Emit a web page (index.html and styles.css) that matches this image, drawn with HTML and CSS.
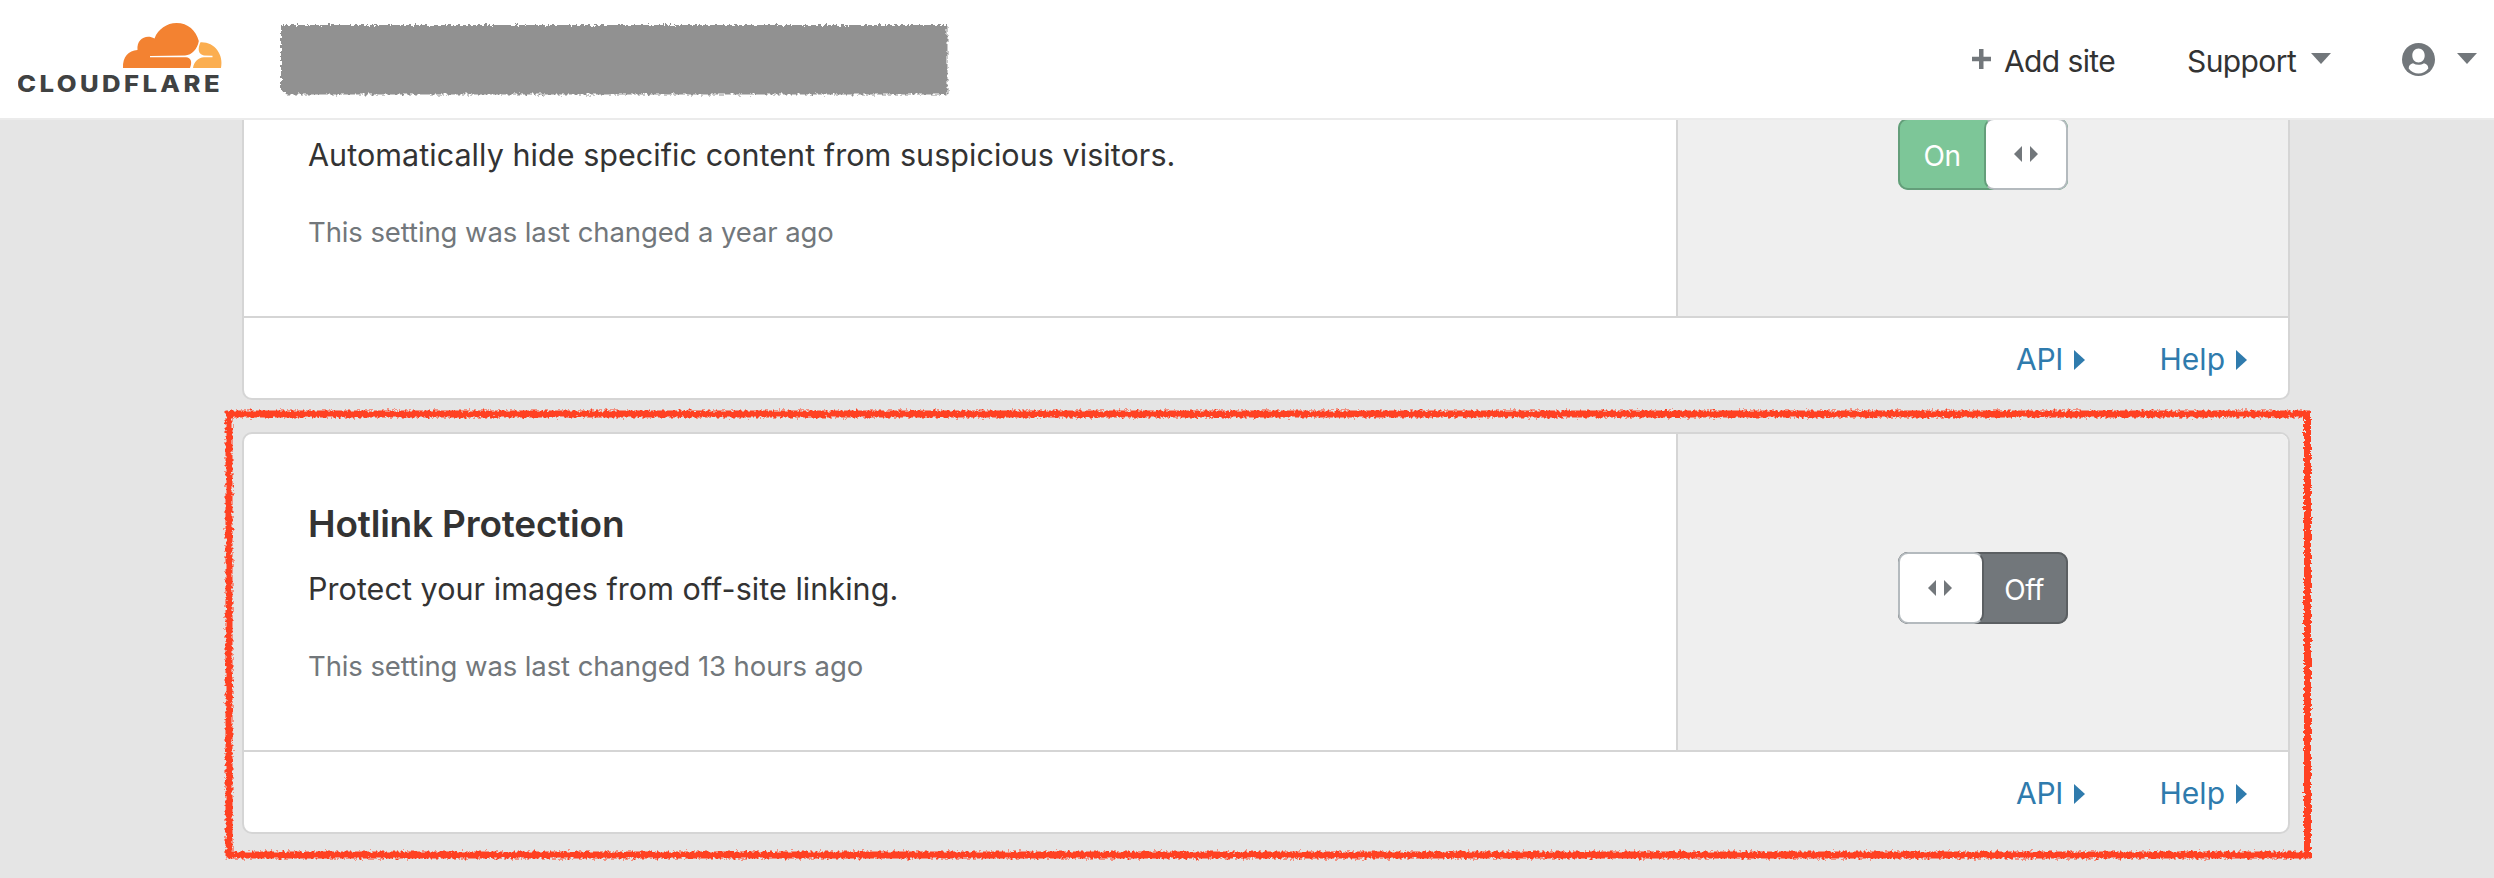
FILE: index.html
```html
<!DOCTYPE html>
<html lang="en">
<head>
<meta charset="utf-8">
<title>Scrape Shield | Cloudflare</title>
<link rel="stylesheet" href="styles.css">
</head>
<body>
<header class="topbar">
  <svg class="logo" width="220" height="80" viewBox="0 0 220 80" role="img" aria-label="Cloudflare">
    <path class="cloud-main" d="M105 53C104.500 42 110.500 35.500 119.500 35C118.500 24 128 19 136.500 23.500C140 14 149 8 158.500 8C170 8 178 15.500 180.800 26C179.500 34 174 40.200 167 40.400L132 41V42.300H168C173 42.500 174.500 47 172 53Z"/>
    <path class="cloud-side" d="M182.500 27.200C196 26.500 206 39 203 53H175C176 47 180 42.500 186 42.300H194.500V40.800L186 40.400C180 39.500 179.500 33 182.500 27.200Z"/>
    <text class="wordmark" x="-1" y="76.500" textLength="206" lengthAdjust="spacingAndGlyphs">CLOUDFLARE</text>
  </svg>
  <svg class="redacted" width="672" height="76" viewBox="0 0 672 76" aria-hidden="true">
    <defs>
      <filter id="rough" x="-2%" y="-5%" width="104%" height="110%" color-interpolation-filters="sRGB">
        <feTurbulence type="fractalNoise" baseFrequency="0.3" numOctaves="2" seed="4"/>
        <feDisplacementMap in="SourceGraphic" scale="6" xChannelSelector="R" yChannelSelector="G"/>
      </filter>
    </defs>
    <path filter="url(#rough)" fill="#919191" d="M3 3H669.500V72.500H9L3 68Z"/>
  </svg>
  <nav class="nav">
    <a class="nav-item add"><svg width="19" height="20" viewBox="0 0 19 20"><path d="M7 0h4.500v7.700H19v4.600h-7.500V20H7v-7.700H0V7.700h7z"/></svg><span>Add site</span></a>
    <a class="nav-item support"><span>Support</span><svg width="20" height="11" viewBox="0 0 20 11"><path d="M0 0h20L10 11z"/></svg></a>
    <a class="nav-item user"><svg class="avatar" width="33" height="33" viewBox="0 0 33 33"><circle cx="16.500" cy="16.500" r="16.500"/><path fill="#fff" d="M16.500 5.500c3.700 0 6.200 3 6.200 7s-2.500 7-6.200 7-6.200-3-6.200-7 2.500-7 6.200-7zM11 20.200c3.500 2 7.500 2 11 0 2.700.5 4.300 2.500 4.300 5.300-2.500 3.300-6 5-9.800 5s-7.300-1.700-9.800-5c0-2.800 1.600-4.800 4.300-5.300z"/></svg><svg width="20" height="11" viewBox="0 0 20 11"><path d="M0 0h20L10 11z"/></svg></a>
  </nav>
</header>
<main class="settings">
  <section class="card">
    <div class="card-body">
      <div class="info">
        <h2 class="title">Server-side Excludes</h2>
        <p class="desc">Automatically hide specific content from suspicious visitors.</p>
        <p class="changed">This setting was last changed a year ago</p>
      </div>
      <div class="control">
        <div class="toggle on"><span class="state">On</span><span class="knob"><svg width="24" height="16" viewBox="0 0 24 16"><path d="M8 0v16L0 8zM16 0v16l8-8z"/></svg></span></div>
      </div>
    </div>
    <footer class="card-footer">
      <a class="link api"><span>API</span><svg width="11" height="20" viewBox="0 0 11 20"><path d="M0 0v20l11-10z"/></svg></a>
      <a class="link help"><span>Help</span><svg width="11" height="20" viewBox="0 0 11 20"><path d="M0 0v20l11-10z"/></svg></a>
    </footer>
  </section>
  <section class="card">
    <div class="card-body">
      <div class="info">
        <h2 class="title">Hotlink Protection</h2>
        <p class="desc">Protect your images from off-site linking.</p>
        <p class="changed">This setting was last changed 13 hours ago</p>
      </div>
      <div class="control">
        <div class="toggle off"><span class="knob"><svg width="24" height="16" viewBox="0 0 24 16"><path d="M8 0v16L0 8zM16 0v16l8-8z"/></svg></span><span class="state">Off</span></div>
      </div>
    </div>
    <footer class="card-footer">
      <a class="link api"><span>API</span><svg width="11" height="20" viewBox="0 0 11 20"><path d="M0 0v20l11-10z"/></svg></a>
      <a class="link help"><span>Help</span><svg width="11" height="20" viewBox="0 0 11 20"><path d="M0 0v20l11-10z"/></svg></a>
    </footer>
    <svg class="marker" width="2094" height="460" viewBox="0 0 2094 460" aria-hidden="true">
      <defs>
        <filter id="crayon" filterUnits="userSpaceOnUse" x="0" y="0" width="2094" height="460" color-interpolation-filters="sRGB">
          <feTurbulence type="fractalNoise" baseFrequency="0.35" numOctaves="2" seed="9"/>
          <feDisplacementMap in="SourceGraphic" scale="6" xChannelSelector="R" yChannelSelector="G"/>
        </filter>
      </defs>
      <path filter="url(#crayon)" fill="none" stroke="#ff4122" stroke-width="7" d="M7 9H2085.500V450H7Z"/>
    </svg>
  </section>
</main>
</body>
</html>
```

FILE: styles.css
```css
* { box-sizing: border-box; }
body {
  margin: 0;
  height: 878px;
  overflow: hidden;
  background: #e5e5e5;
  color: #333;
  font-family: Inter, "Liberation Sans", sans-serif;
  font-size: 30px;
}
h2, p { margin: 0; }
svg { display: block; flex: none; fill: #72777b; }

.topbar {
  position: relative;
  z-index: 2;
  display: flex;
  height: 120px;
  padding-left: 18px;
  background: #fff;
  border-bottom: 2px solid #ebebeb;
}
.logo { margin-top: 15px; }
.cloud-main { fill: #f38231; }
.cloud-side { fill: #fbae50; }
.wordmark { fill: #404242; font-size: 22.500px; font-weight: 800; letter-spacing: 3px; }
.redacted { margin: 22px 0 0 40px; }
.nav {
  display: flex;
  margin-left: auto;
  padding-right: 17px;
  height: 118px;
  white-space: nowrap;
  line-height: 36px;
  padding-top: 43px;
  letter-spacing: -0.6px;
}
.nav-item { display: flex; align-items: flex-start; }
.add { width: 215px; }
.add svg { margin: 6px 13px 0 0; }
.support { width: 215px; justify-content: flex-start; }
.support svg { margin: 10px 0 0 15px; }
.user svg { margin-top: 10px; }
.user .avatar { margin: 0 22px 0 0; }

.settings {
  display: flex;
  flex-direction: column;
  gap: 32px;
  width: 2048px;
  margin: -122px auto 0 242px;
}
.card {
  position: relative;
  height: 402px;
  background: #fff;
  border: 2px solid #d5d5d5;
  border-radius: 10px;
}
.card-body { display: flex; height: 318px; border-bottom: 2px solid #d5d5d5; }
.info { width: 1432px; padding: 67px 0 0 64px; white-space: nowrap; }
.title { font-size: 37px; line-height: 46px; font-weight: 600; letter-spacing: -0.2px; }
.desc { margin-top: 24px; font-size: 30.5px; line-height: 36px; letter-spacing: 0.05px; }
.changed { margin-top: 42px; font-size: 27.5px; line-height: 34px; letter-spacing: -0.1px; color: #72777b; }
.control {
  flex: 1;
  display: flex;
  justify-content: center;
  padding-top: 118px;
  background: #efefef;
  border-left: 2px solid #d5d5d5;
  border-top-right-radius: 8px;
}
.toggle {
  display: flex;
  width: 170px;
  height: 72px;
  border-radius: 10px;
  color: #fff;
  font-size: 28px;
  line-height: 76px;
}
.on { background: #7dc698; box-shadow: inset 0 0 0 2px #649e7a; }
.off { background: #72777b; box-shadow: inset 0 0 0 2px #5b5f62; }
.state { flex: 1; text-align: center; letter-spacing: -0.5px; }
.on .state { padding-left: 2px; }
.off .state { padding-right: 4px; }
.knob {
  display: flex;
  align-items: center;
  justify-content: center;
  width: 84px;
  height: 72px;
  background: #fff;
  border: 2px solid #b4babe;
  border-radius: 10px;
}
.off .knob { width: 86px; padding-right: 2px; border-right-color: #5b5f62; }
.on .knob { border-left-color: #649e7a; }

.card-footer { display: flex; justify-content: flex-end; height: 80px; padding: 23px 41px 0 0; color: #2f7bad; line-height: 36px; }
.link { display: flex; justify-content: flex-end; }
.link svg { fill: #2f7bad; margin: 9px 0 0 11px; }
.api { letter-spacing: -0.3px; }
.help { width: 162px; }
.marker { position: absolute; left: -22px; top: -29px; }
```
